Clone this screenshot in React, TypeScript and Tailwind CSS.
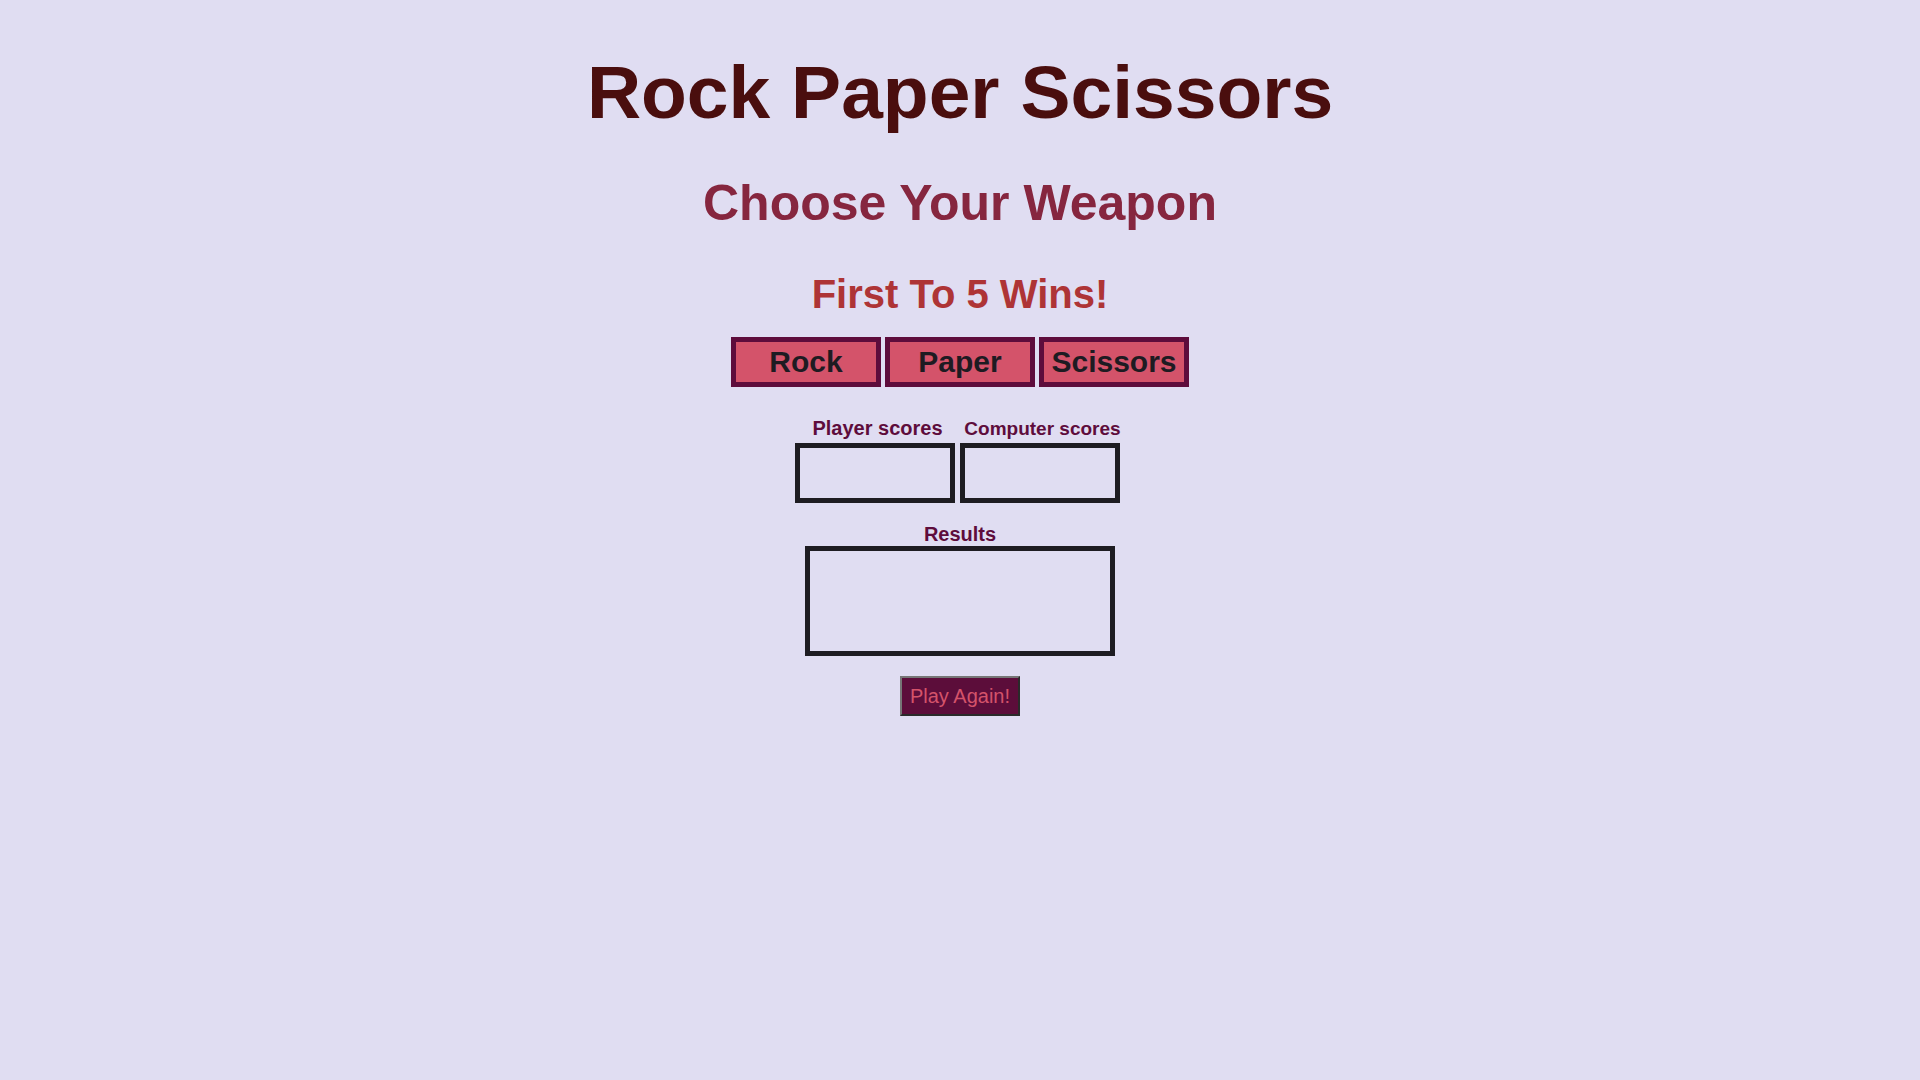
import React from "react";

export default function App() {
  const weapons = ["Rock", "Paper", "Scissors"];
  return (
    <div className="min-h-screen w-full bg-[#e0ddf2] font-['Liberation_Sans',Arial,sans-serif] flex flex-col items-center">
      <h1 className="mt-[55px] text-[75px] leading-none font-bold text-[#4a0e0e]">Rock Paper Scissors</h1>
      <h2 className="mt-[48px] text-[50px] leading-none font-bold text-[#86263f]">Choose Your Weapon</h2>
      <h3 className="mt-[46px] text-[40px] leading-none font-bold text-[#ae3436]">First To 5 Wins!</h3>
      <div className="mt-[23px] flex gap-[4px]">
        {weapons.map((w) => (
          <button
            key={w}
            className="w-[150px] h-[50px] border-[5px] border-[#5e0c3c] bg-[#d4536a] text-[30px] leading-none font-bold text-[#1e1b22] flex items-center justify-center"
          >
            {w}
          </button>
        ))}
      </div>
      <div className="mt-[31px] flex gap-[5px] pr-[5px]">
        <div className="flex flex-col items-center w-[160px]">
          <div className="ml-[5px] h-[20px] text-[20px] leading-[20px] font-bold text-[#5e0c3c] whitespace-nowrap">Player scores</div>
          <div className="mt-[5px] w-[160px] h-[60px] border-[5px] border-[#1e1c22]"></div>
        </div>
        <div className="flex flex-col items-center w-[160px]">
          <div className="ml-[5px] h-[20px] text-[19px] leading-[21px] font-bold text-[#5e0c3c] whitespace-nowrap">Computer scores</div>
          <div className="mt-[5px] w-[160px] h-[60px] border-[5px] border-[#1e1c22]"></div>
        </div>
      </div>
      <div className="mt-[21px] h-[20px] text-[20px] leading-[20px] font-bold text-[#5e0c3c]">Results</div>
      <div className="mt-[2px] w-[310px] h-[110px] border-[5px] border-[#1e1c22]"></div>
      <button className="mt-[20px] w-[120px] h-[40px] border-2 border-t-[#767676] border-l-[#767676] border-b-[#2a2a2a] border-r-[#2a2a2a] bg-[#5c0d3a] text-[20px] leading-none text-[#d4536a] flex items-center justify-center">
        Play Again!
      </button>
    </div>
  );
}
